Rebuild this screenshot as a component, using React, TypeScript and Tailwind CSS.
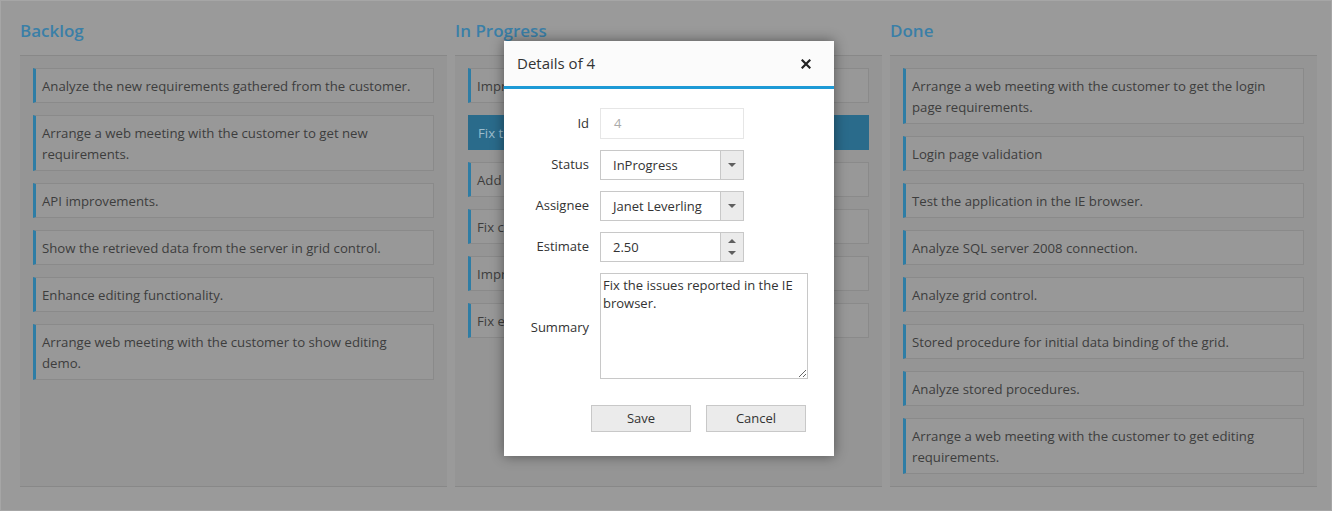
type Card = { id: number; text: string };

const COLUMNS: { title: string; cards: Card[] }[] = [
  {
    title: "Backlog",
    cards: [
      { id: 1, text: "Analyze the new requirements gathered from the customer." },
      { id: 2, text: "Arrange a web meeting with the customer to get new requirements." },
      { id: 3, text: "API improvements." },
      { id: 5, text: "Show the retrieved data from the server in grid control." },
      { id: 6, text: "Enhance editing functionality." },
      { id: 7, text: "Arrange web meeting with the customer to show editing demo." },
    ],
  },
  {
    title: "In Progress",
    cards: [
      { id: 8, text: "Improve application performance." },
      { id: 4, text: "Fix the issues reported in the IE browser." },
      { id: 9, text: "Add responsive support to application." },
      { id: 10, text: "Fix cannot open user's default database SQL error." },
      { id: 11, text: "Improve the performance of editing functionality." },
      { id: 12, text: "Fix editing functionality in the grid." },
    ],
  },
  {
    title: "Done",
    cards: [
      { id: 13, text: "Arrange a web meeting with the customer to get the login page requirements." },
      { id: 14, text: "Login page validation" },
      { id: 15, text: "Test the application in the IE browser." },
      { id: 16, text: "Analyze SQL server 2008 connection." },
      { id: 17, text: "Analyze grid control." },
      { id: 18, text: "Stored procedure for initial data binding of the grid." },
      { id: 19, text: "Analyze stored procedures." },
      { id: 20, text: "Arrange a web meeting with the customer to get editing requirements." },
    ],
  },
];

const SELECTED = 4;

function Caret({ up = false }: { up?: boolean }) {
  return (
    <svg width="8" height="4" viewBox="0 0 8 4" className="block">
      <path d={up ? "M0 4 L4 0 L8 4 Z" : "M0 0 L8 0 L4 4 Z"} fill="#5f5f5f" />
    </svg>
  );
}

function DropDown({ value }: { value: string }) {
  return (
    <div className="flex h-[30px] w-[144px] border border-[#c8c8c8] bg-white">
      <span className="flex-1 pl-[12px] leading-[28px] text-[#333]">{value}</span>
      <span className="flex w-[23px] items-center justify-center border-l border-[#c8c8c8] bg-[#ebebeb]">
        <Caret />
      </span>
    </div>
  );
}

export default function App() {
  return (
    <div
      className="relative h-[511px] w-[1332px] overflow-hidden border border-[#a6a6a6] bg-[#9a9a9a] pl-[19px] text-[13.2px]"
      style={{ fontFamily: '"Open Sans", "Noto Sans", sans-serif' }}
    >
      <div className="grid grid-cols-[427px_427px_427px] gap-x-2">
        {COLUMNS.map((col) => (
          <div key={col.title} className="flex flex-col">
            <div className="h-[55px] border-b border-[#888] pt-[18px] text-[17px] leading-[24px] font-semibold text-[#3a7fa7]">
              {col.title}
            </div>
            <div className="flex flex-1 flex-col gap-[12px] border-b border-[#888] bg-[#959595] px-[13px] pt-[12px] pb-[12px]">
              {col.cards.map((card) =>
                card.id === SELECTED ? (
                  <div
                    key={card.id}
                    className="border border-[#2a6b8b] bg-[#2a6b8b] pt-[7px] pb-[5px] pl-[9px] pr-[10px] leading-[21px] text-[#9cbccb]"
                  >
                    {card.text}
                  </div>
                ) : (
                  <div
                    key={card.id}
                    className="border border-l-[3px] border-[#8a8a8a] border-l-[#2e7da5] bg-[#989898] pt-[7px] pb-[5px] pl-[6px] pr-[10px] leading-[21px] text-[#3d3d3d]"
                  >
                    {card.text}
                  </div>
                ),
              )}
            </div>
          </div>
        ))}
      </div>

      <div className="absolute top-[40px] left-[503px] w-[330px] bg-white shadow-[0_0_12px_rgba(0,0,0,0.45)]">
        <div className="flex h-[48px] items-center justify-between border-b-[3px] border-[#1d9ad6] bg-[#fbfbfb] pr-[23px] pl-[13px]">
          <span className="text-[15px] text-[#333]">Details of 4</span>
          <svg width="10" height="10" viewBox="0 0 10 10">
            <path d="M1.5 1.5 L8.5 8.5 M8.5 1.5 L1.5 8.5" stroke="#222" strokeWidth="2.2" strokeLinecap="square" />
          </svg>
        </div>
        <div className="pt-[19px] pb-[24px]">
          <div className="grid grid-cols-[85px_auto] items-center gap-x-[11px] gap-y-[11px] text-[13px] text-[#333]">
            <span className="text-right">Id</span>
            <div className="h-[31px] w-[144px] border border-[#e6e6e6] pl-[13px] leading-[29px] text-[#aaa]">4</div>

            <span className="text-right">Status</span>
            <DropDown value="InProgress" />

            <span className="text-right">Assignee</span>
            <DropDown value="Janet Leverling" />

            <span className="text-right">Estimate</span>
            <div className="flex h-[30px] w-[144px] border border-[#c8c8c8] bg-white">
              <span className="flex-1 pl-[12px] leading-[28px]">2.50</span>
              <span className="flex w-[23px] flex-col items-center justify-center gap-[8px] border-l border-[#c8c8c8] bg-[#ebebeb]">
                <Caret up />
                <Caret />
              </span>
            </div>

            <span className="pt-[4px] text-right">Summary</span>
            <textarea
              readOnly
              defaultValue="Fix the issues reported in the IE browser."
              className="h-[106px] w-[208px] border border-[#c8c8c8] px-[2px] py-[2px] leading-[18px] text-[#333] outline-none"
              style={{ fontFamily: '"Open Sans", sans-serif', fontSize: 13 }}
            />
          </div>
          <div className="mt-[26px] flex justify-end gap-[15px] pr-[28px] text-[13px]">
            <button className="h-[27px] w-[100px] border border-[#c8c8c8] bg-[#ebebeb] text-[#333]">Save</button>
            <button className="h-[27px] w-[100px] border border-[#c8c8c8] bg-[#ebebeb] text-[#333]">Cancel</button>
          </div>
        </div>
      </div>
    </div>
  );
}
